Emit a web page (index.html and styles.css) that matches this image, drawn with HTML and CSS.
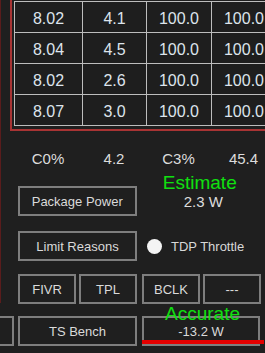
FILE: index.html
```html
<!DOCTYPE html>
<html lang="en">
<head>
  <meta charset="UTF-8" />
  <title>ThrottleStop</title>
  <link rel="stylesheet" href="styles.css">
</head>
<body>
  <div class="panel">
    <!-- per-core table -->
    <div class="frame">
      <div class="grid">
        <div class="cell">8.02</div><div class="cell">4.1</div><div class="cell">100.0</div><div class="cell">100.0</div>
        <div class="cell">8.04</div><div class="cell">4.5</div><div class="cell">100.0</div><div class="cell">100.0</div>
        <div class="cell">8.02</div><div class="cell">2.6</div><div class="cell">100.0</div><div class="cell">100.0</div>
        <div class="cell">8.07</div><div class="cell">3.0</div><div class="cell">100.0</div><div class="cell">100.0</div>
      </div>
    </div>

    <div class="stats">
      <span>C0%</span><span>4.2</span><span>C3%</span><span>45.4</span>
    </div>

    <div class="controls">
      <div class="row">
        <button class="btn wide">Package Power</button>
        <div class="value">
          <span class="note estimate">Estimate</span>
          2.3 W
        </div>
      </div>

      <div class="row">
        <button class="btn wide">Limit Reasons</button>
        <label class="check">
          <span class="dot"></span> TDP Throttle
        </label>
      </div>

      <div class="row small-row">
        <div class="pair">
          <button class="btn small">FIVR</button>
          <button class="btn small">TPL</button>
        </div>
        <div class="pair">
          <button class="btn small">BCLK</button>
          <button class="btn small">---</button>
        </div>
      </div>
    </div>
  </div>

  <div class="bottom-row">
    <button class="btn"></button>
    <button class="btn">TS Bench</button>
    <div class="btn readout">
      <span class="note accurate">Accurate</span>
      -13.2 W
      <span class="underline"></span>
    </div>
  </div>
</body>
</html>
```

FILE: styles.css
```css
html, body {
  margin: 0;
  overflow: hidden;
}
body {
  background: #1f1f1f;
  color: #d6d6d6;
  font-family: 'Liberation Sans', Arial, sans-serif;
  width: 265px;
  height: 353px;
}
.panel {
  border-left: 1px solid #5a1c1c;
  padding-left: 9px;
  height: 303px;
}
/* Table */
.frame {
  border: 2px solid #a83434;
  border-top: none;
  border-right: none;
  padding: 1px 0 3px 2px;
  width: 300px;
}
.grid {
  display: grid;
  grid-template-columns: 67px 63px 64px 64px;
  gap: 1px;
  background: #bdbdbd;
  border: 1px solid #bdbdbd;
  width: max-content;
}
.cell {
  background: #1e1e1e;
  height: 27px;
  padding-top: 3px;
  display: flex;
  align-items: center;
  justify-content: center;
  font-size: 16px;
  color: #dde4ec;
}
.stats {
  display: grid;
  grid-template-columns: 68px 64px 65px 65px;
  margin: 19px 0 0 4px;
  font-size: 15px;
  text-align: center;
  color: #dcdcdc;
}
.controls {
  margin: 19px 0 0 8px;
}
.row {
  display: flex;
  align-items: center;
  margin-bottom: 15px;
}
.small-row {
  gap: 5px;
  margin-top: -2px;
}
.pair {
  display: flex;
  gap: 3px;
}
.btn {
  box-sizing: border-box;
  height: 30px;
  background: #1f1f1f;
  border: 2px solid #7e7e7e;
  color: #dadada;
  font-family: inherit;
  font-size: 13px;
  padding: 0;
  display: flex;
  align-items: center;
  justify-content: center;
}
.wide {
  width: 119px;
}
.small {
  width: 58px;
}
.value {
  position: relative;
  width: 124px;
  padding-left: 5px;
  text-align: center;
  font-size: 15px;
  color: #dcdcdc;
}
.note {
  position: absolute;
  left: 0;
  right: 0;
  color: #10e010;
  font-size: 19px;
  line-height: 19px;
  text-align: center;
}
.estimate {
  top: -20px;
  padding-right: 2px;
}
.check {
  display: flex;
  align-items: center;
  margin-left: 10px;
  font-size: 13px;
  color: #d8d8d8;
  gap: 9px;
}
.dot {
  width: 15px;
  height: 15px;
  border-radius: 50%;
  background: #f4f4f4;
}
/* Last row, cut off on the left */
.bottom-row {
  display: grid;
  grid-template-columns: 115px 119px 119px;
  column-gap: 4px;
  margin: 13px 0 0 -101px;
}
.readout {
  position: relative;
  margin-left: 1px;
  padding-top: 1px;
}
.accurate {
  top: -14px;
  padding-left: 3px;
}
.underline {
  position: absolute;
  left: -2px;
  bottom: 0;
  width: 122px;
  height: 4px;
  background: #e40000;
}
```
